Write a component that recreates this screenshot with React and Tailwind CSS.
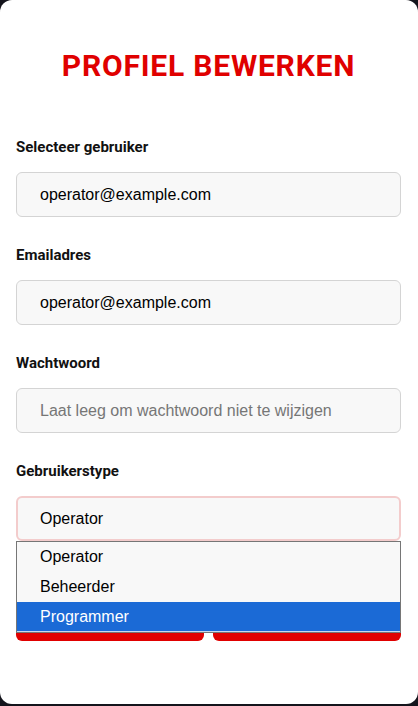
import React, { useState } from 'react';

// Profile edit form with the user type select opened
const Field = ({ label, children }) => (
    <div className="mb-[28px]">
        <label className="block text-[15px] leading-[20px] font-bold text-[#111] mb-[15px]" style={{ fontFamily: 'Roboto, sans-serif' }}>{label}</label>
        {children}
    </div>
);

const inputCls = "w-full h-[45px] px-[23px] bg-[#f8f8f8] border border-[#d4d4d4] rounded-[6px] text-[16px] text-black placeholder:text-[#767676] outline-none";

const App = () => {
    const [type, setType] = useState('Operator');
    const options = ['Operator', 'Beheerder', 'Programmer'];

    return (
        <div className="w-[418px] h-[706px] bg-[#14141c] overflow-hidden">
            <div className="h-[704px] bg-white rounded-[12px] pl-4 pr-[17px] pt-[49px]" style={{ fontFamily: '"Liberation Sans", Arial, sans-serif' }}>
                <h1 className="text-center text-[30px] leading-[34px] font-bold text-[#e00000] tracking-[0.8px] mb-[54px]" style={{ fontFamily: 'Roboto, sans-serif' }}>
                    PROFIEL BEWERKEN
                </h1>

                <Field label="Selecteer gebruiker">
                    <input className={inputCls} defaultValue="operator@example.com" />
                </Field>
                <Field label="Emailadres">
                    <input className={inputCls} defaultValue="operator@example.com" />
                </Field>
                <Field label="Wachtwoord">
                    <input className={inputCls} type="password" placeholder="Laat leeg om wachtwoord niet te wijzigen" />
                </Field>

                <div className="relative">
                    <label className="block text-[15px] leading-[20px] font-bold text-[#111] mb-[15px]" style={{ fontFamily: 'Roboto, sans-serif' }}>Gebruikerstype</label>
                    <div className="h-[45px] px-[22px] flex items-center bg-[#f8f8f8] border-2 border-[#f3cccc] rounded-[6px] text-[16px] text-black">
                        {type}
                    </div>

                    {/* open select list */}
                    <div className="absolute left-0 right-0 top-[80px] z-10 border border-[#767676] bg-[#f8f8f8]">
                        {options.map((o) => (
                            <div
                                key={o}
                                onClick={() => setType(o)}
                                className={`h-[30px] px-[23px] flex items-center text-[16px] ${o === 'Programmer' ? 'bg-[#1b6ad6] text-white border-b border-[#c8d8ee]' : 'text-black'}`}
                            >
                                {o}
                            </div>
                        ))}
                    </div>
                </div>

                {/* buttons sit behind the open list */}
                <div className="flex gap-[9px] mt-[54px]">
                    <button aria-label="Opslaan" className="flex-1 h-[46px] bg-[#e00000] rounded-[6px]"></button>
                    <button aria-label="Verwijderen" className="flex-1 h-[46px] bg-[#e00000] rounded-[6px]"></button>
                </div>
            </div>
        </div>
    );
};

export default App;
